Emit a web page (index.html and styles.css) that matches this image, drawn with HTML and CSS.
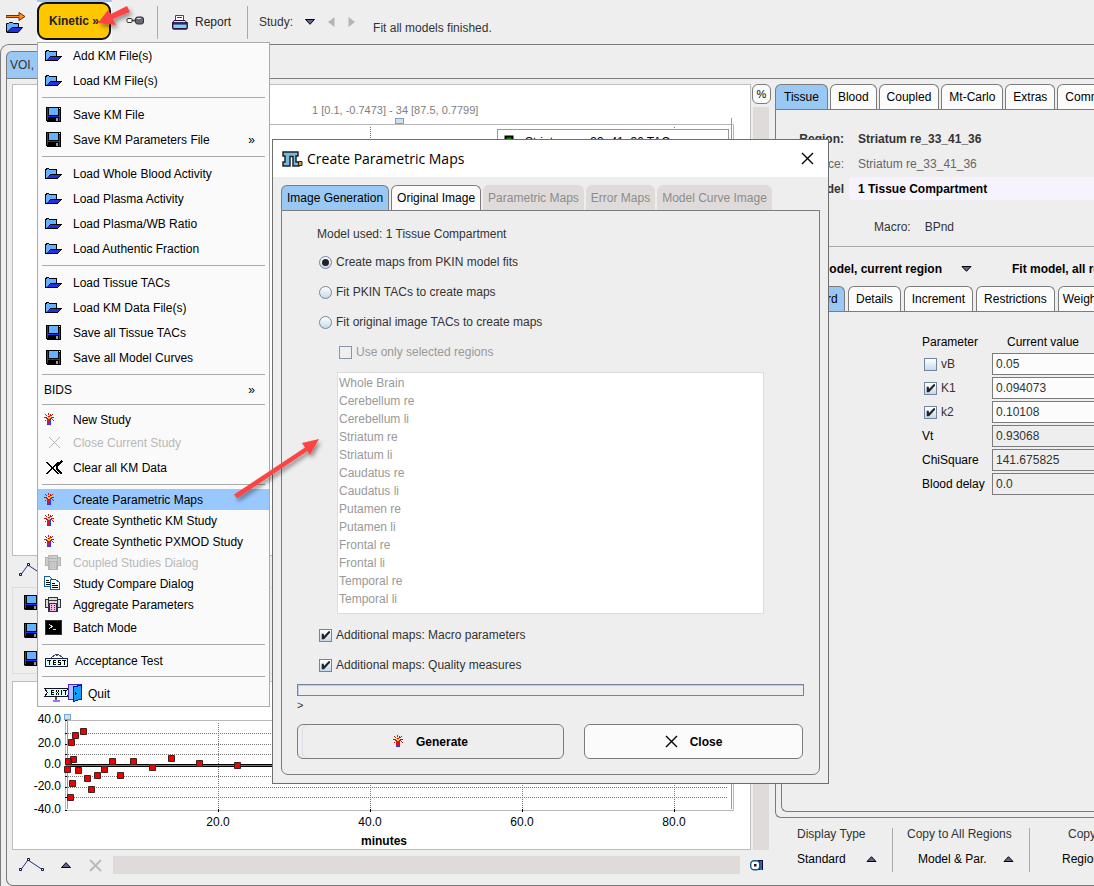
FILE: index.html
```html
<!DOCTYPE html>
<html lang="en">
<head>
<meta charset="utf-8">
<title>Kinetic modeling</title>
<link rel="stylesheet" href="styles.css">
</head>
<body>
<svg class="defs" aria-hidden="true">
  <symbol id="folder" viewBox="0 0 17 13"><path d="M0 2h1V1h3v1h8v5h5v1h-1v1h-1v1h-1v1h-1v1H0z" fill="#000"/><path d="M1 3h1V2h2v1h7v4H5L4 8 3 9 2 10 1 11z" fill="#62b3ff"/><path d="M5 8h10v1h-1v1h-1v1H2v-1h1V9h2z" fill="#2430e0"/></symbol>
  <symbol id="floppy" viewBox="0 0 15 15"><path d="M0 0h15v15H1l-1-1z" fill="#000"/><path d="M1 1h1v12H1zM13 3h1v11h-1zM2 9h11v1H2z" fill="#2430e0"/><path d="M3 1h9v7H3z" fill="#62b3ff"/><path d="M13 1h1v1h-1z" fill="#fff"/><path d="M10 11h2v3h-2z" fill="#999"/></symbol>
  <symbol id="wand" viewBox="0 0 11 13"><path d="M3 6h4v6H3z" fill="#2a35ff"/><path d="M3 6h3v5H3z" fill="#d81818"/><path d="M4 0h1v2H4zM6 1h1v2H6zM1 1h1v1H1zM2 2h1v1H2zM8 1h1v1H8zM7 2h1v1H7zM0 4h3v1H0zM7 4h3v1H7zM2 5h2v1H2zM6 5h2v1H6zM1 7h1v1H1zM8 6h1v1H8zM9 7h1v1H9z" fill="#c01818"/><path d="M3 3h1v1H3zM5 2h1v1H5zM6 3h1v1H6zM4 4h2v2H4z" fill="#ffc020"/><path d="M4 3h2v1H4z" fill="#c01818"/></symbol>
  <symbol id="cross" viewBox="0 0 13 13"><path d="M1 1l11 11M12 1L1 12" stroke="currentColor" stroke-width="1.400" fill="none"/></symbol>
  <symbol id="crosses" viewBox="0 0 17 15"><path d="M1 2l11 12M12 2L1 14M16 1l-5 5v3l5 5" stroke="#000" stroke-width="1.500" fill="none"/></symbol>
  <symbol id="multi" viewBox="0 0 18 17"><path d="M1 3h3V1h10v2h3v9h-3v4H4v-4H1z" fill="var(--s)"/><path d="M2 4h2v7H2zM14 4h2v7h-2zM5 2h8v2H5zM5 5h8v2H5z" fill="var(--f)"/><path d="M6 8h6v7H6z" fill="var(--p)"/><path d="M7 9h1v1H7zM10 9h1v1h-1zM7 11h1v1H7zM10 11h1v1h-1zM7 13h1v1H7zM10 13h1v1h-1z" fill="var(--s)"/></symbol>
  <symbol id="copy" viewBox="0 0 16 15"><path d="M.5.500h5l3 3v7h-8z" fill="#fff" stroke="#106090"/><path d="M2 4.500h3m-3 2h4m-4 2h4" stroke="#000"/><path d="M6.500 3.500h5l4 3v7h-9z" fill="#fff" stroke="#106090"/><path d="M8 7.500h3m-3 2h6m-6 2h6" stroke="#000"/></symbol>
  <symbol id="term" viewBox="0 0 17 15"><path d="M.5.500h16v14H.5z" fill="#000" stroke="#333"/><path d="M4 4l3 2.500L4 9M8 9.500h3" stroke="#ddd" fill="none"/></symbol>
  <symbol id="test" viewBox="0 0 24 15"><path d="M6 5l5-4h2l5 4M10 1.500l2 1 2-1" stroke="#447" fill="none"/><path d="M.5 5.500h22v8H.5z" fill="#e0fff8" stroke="#124"/><path d="M2 7.500h4M4.500 7.500V12M11 7.500H8.500v4H11M8 9.500h2.500M16 7.500h-2.500v2h2v2H13M17 7.500h4M19.500 7.500V12" stroke="#000" fill="none"/></symbol>
  <symbol id="exit" viewBox="0 0 38 19"><path d="M12 12v5" stroke="#187a30" stroke-width="2"/><path d="M9 17h7" stroke="#a070ff" stroke-width="2"/><path d="M.5 4.500h23l2 4-2 4H.5l3-4z" fill="#d8fff4" stroke="#112"/><path d="M10 6.500H7.500v4H10M7 8.500h3M12 6.500l3 4M15 6.500l-3 4M17.500 6v5M19 6.500h4M21.500 6.500V11" stroke="#000" fill="none"/><path d="M24.500.500h13v15h-13z" fill="#a8c8ff" stroke="#4a20d0"/><path d="M29.500 3l8-2v14l-8 2.500z" fill="#10a0ff" stroke="#1010a0"/><path d="M31 8l2 1.500-2 1.500z"/></symbol>
  <symbol id="line" viewBox="0 0 26 14"><path d="M2 11.500L9 2l15 10" stroke="#223088" fill="none"/><path d="M.5 10.500h2v2h-2zM8.500.500h2v2h-2zM22.500 10.500h2v2h-2z" fill="#fff" stroke="#114"/></symbol>
  <symbol id="up" viewBox="0 0 10 6"><path d="M.5 5.500h9L5 .7z" fill="#666290" stroke="#000"/></symbol>
  <symbol id="down" viewBox="0 0 10 6"><path d="M.5.500h9L5 5.300z" fill="#666290" stroke="#000"/></symbol>
</svg>

<header class="toolbar">
  <svg class="openicon" viewBox="0 0 20 21" width="20" height="21"><path d="M0 3.500h13V.500L19 4.500l-6 4V5.500H0z" fill="#ff8c1a" stroke="#6b3200"/><path d="M.5 20V11.500h2l1-1h3l1 1h5V18z" fill="#62b3ff" stroke="#000"/><path d="M1 20.500l5-5h10.500l-4.500 5z" fill="#2430e0" stroke="#000"/></svg>
  <div class="kwrap"><button class="kinetic">Kinetic »</button></div>
  <svg class="plug" viewBox="0 0 18 9" width="18" height="9"><path d="M5 4.500h5" stroke="#555" stroke-width="2"/><rect x="1" y="2.500" width="5" height="4" rx="1" fill="#fff" stroke="#333"/><rect x="9.500" y="1" width="8" height="7" rx="2" fill="#667" stroke="#333"/><path d="M11 2.500h4" stroke="#dde"/></svg>
  <span class="vsep"></span>
  <button class="plain report"><svg viewBox="0 0 16 16" width="16" height="16"><path d="M3.500 6V1.500h8V6" fill="#fff" stroke="#446"/><path d="M5 3.500h5" stroke="#446"/><path d="M2 6.500h11l2 2.500H.5z" fill="#e8e0f0" stroke="#2a1040"/><path d="M.7 9h14.500v5l-1 1H1.700l-1-1z" fill="#72d4ff" stroke="#2a1040" stroke-width="1.400"/><path d="M1 10h14M2 14.500h12" stroke="#2a1040"/></svg>Report</button>
  <span class="vsep"></span>
  <span class="study">Study:</span>
  <button class="plain drop" aria-label="Choose study"><svg width="10" height="6"><use href="#down"/></svg></button>
  <button class="plain nav" aria-label="Previous"><svg width="7" height="10"><path d="M6.500 0v10L0 5z" fill="#b5b5b5"/></svg></button>
  <button class="plain nav" aria-label="Next"><svg width="7" height="10"><path d="M.5 0v10L7 5z" fill="#b5b5b5"/></svg></button>
  <span class="status">Fit all models finished.</span>
</header>

<main class="frame">
  <div class="tabs"><button class="tab on voi">VOI, S</button></div>
  <div class="panel">
    <section class="left">
      <div class="plot">
        <svg class="fill" viewBox="13 85 737 470" preserveAspectRatio="xMinYMin slice">
          <text x="312" y="114" font-size="11" fill="#808080">1 [0.1, -0.7473] - 34 [87.5, 0.7799]</text>
          <path d="M66 124.500h667.500V540" stroke="#b8b8b8" fill="none"/>
          <path d="M731.500 118v430" stroke="#9a90cc"/>
          <path d="M370.500 127v410M674.500 127v410" stroke="#777" stroke-dasharray="1 1"/>
          <rect x="395.500" y="118.500" width="8" height="5" fill="#ddd" stroke="#7aa0dd"/>
          <rect x="497.500" y="129.500" width="231" height="60" fill="#fff" stroke="#999"/>
          <rect x="505.500" y="136.500" width="7" height="7" fill="#0a8a0a" stroke="#000" stroke-width="2"/>
          <text x="525" y="146" font-size="12">Striatum re_33_41_36 TAC</text>
        </svg>
      </div>
      <div class="side"><button class="pct">%</button><span class="bar"></span></div>
      <div class="tools"><svg width="26" height="14"><use href="#line"/></svg></div><i></i>
      <div class="saves">
        <svg width="15" height="15"><use href="#floppy"/></svg><svg width="15" height="15"><use href="#floppy"/></svg><svg width="15" height="15"><use href="#floppy"/></svg>
      </div><i></i>
      <div class="plot low">
        <svg class="fill" viewBox="13 682 737 167" preserveAspectRatio="xMinYMin slice">
          <g font-size="12" text-anchor="end"><text x="61" y="723">40.0</text><text x="61" y="747">20.0</text><text x="61" y="768">0.0</text><text x="61" y="790">-20.0</text><text x="61" y="813">-40.0</text></g>
          <g font-size="12" text-anchor="middle"><text x="218" y="826">20.0</text><text x="370" y="826">40.0</text><text x="522" y="826">60.0</text><text x="674" y="826">80.0</text><text x="384" y="845" font-weight="bold">minutes</text></g>
          <path d="M65.500 720.500h668v90h-668z" fill="none" stroke="#b8b8b8"/>
          <path d="M67.500 720v89M731.500 720v89" stroke="#9a90cc"/>
          <path d="M68 733.500h660M68 744.500h660M68 754.500h660M68 776.500h660M68 787.500h660M68 797.500h660M218.500 723v87M370.500 723v87M522.500 723v87M674.500 723v87" stroke="#777" stroke-dasharray="1 1"/>
          <path d="M65 720.500h2m-2 13h2m-2 11h2m-2 10h2m-2 22h2m-2 11h2m-2 10h2m-2 13h2M218.500 809v3M370.500 809v3M522.500 809v3M674.500 809v3" stroke="#000"/>
          <path d="M66 764.500h665M66 766.500h665" stroke="#000"/><path d="M66 765.500h665" stroke="#777"/>
          <rect x="64.500" y="714.500" width="6" height="5" fill="#ddd" stroke="#6fa8e8"/>
          <path fill="#f00000" stroke="#402020" d="M68.500 739.500h6v6h-6zM72.500 732.500h6v6h-6zM80.500 728.500h6v6h-6zM65.500 758.500h6v6h-6zM70.500 756.500h6v6h-6zM64.500 766.500h6v6h-6zM75.500 767.500h6v6h-6zM69.500 780.500h6v6h-6zM67.500 794.500h6v6h-6zM84.500 775.500h6v6h-6zM88.500 786.500h6v6h-6zM94.500 772.500h6v6h-6zM101.500 766.500h6v6h-6zM109.500 758.500h6v6h-6zM117.500 772.500h6v6h-6zM130.500 758.500h6v6h-6zM149.500 764.500h6v6h-6zM168.500 755.500h6v6h-6zM196.500 760.500h6v6h-6zM234.500 762.500h6v6h-6z"/>
        </svg>
      </div>
      <div class="side low"><span class="bar"></span></div>
      <div class="foot">
        <svg width="26" height="14"><use href="#line"/></svg>
        <svg width="10" height="6"><use href="#up"/></svg>
        <svg class="dim" width="13" height="13"><path d="M1 1l11 11M12 1L1 12" stroke="#bbb" stroke-width="2"/></svg>
        <span class="track"></span>
      </div>
      <div class="gear"><svg viewBox="0 0 14 12" width="14" height="12"><path d="M8 1h5v10H8z" fill="#1a0a3a"/><path d="M11 2v9" stroke="#2070a0" stroke-width="2"/><rect x=".7" y="1.700" width="9" height="9" rx="3.500" fill="#fff" stroke="#105a90" stroke-width="1.400"/><path d="M4 5h2.500v2.500H4z" fill="#200828"/></svg></div>
    </section>

    <section class="right">
      <div class="tabs"><button class="tab on tissue">Tissue</button><button class="tab">Blood</button><button class="tab">Coupled</button><button class="tab">Mt-Carlo</button><button class="tab">Extras</button><button class="tab">Comments</button></div>
      <div class="box outer">
        <div class="info">
          <b class="key">Region:</b><b>Striatum re_33_41_36</b>
          <span class="key soft">Source:</span><span class="soft">Striatum re_33_41_36</span>
          <b class="key">Model</b><button class="modelname">1 Tissue Compartment</button>
        </div>
        <div class="macro"><span>Macro:</span><span>BPnd</span></div>
        <div class="fit"><button class="plain fit1">Fit model, current region</button><svg width="11" height="6"><use href="#down"/></svg><button class="plain fit2">Fit model, all regions</button></div>
        <div class="tabs two"><button class="tab on std">Standard</button><button class="tab">Details</button><button class="tab">Increment</button><button class="tab">Restrictions</button><button class="tab weight">Weighting</button></div>
        <div class="box inner">
          <table class="params">
            <thead><tr><th>Parameter</th><th class="cv">Current value</th></tr></thead>
            <tbody>
              <tr><td><label class="ck"><input type="checkbox">vB</label></td><td><input class="val" value="0.05" aria-label="vB"></td></tr>
              <tr><td><label class="ck"><input type="checkbox" checked>K1</label></td><td><input class="val" value="0.094073" aria-label="K1"></td></tr>
              <tr><td><label class="ck"><input type="checkbox" checked>k2</label></td><td><input class="val" value="0.10108" aria-label="k2"></td></tr>
              <tr><td><label for="vt">Vt</label></td><td><input class="val ro" id="vt" value="0.93068" readonly></td></tr>
              <tr><td><label for="chi">ChiSquare</label></td><td><input class="val ro" id="chi" value="141.675825" readonly></td></tr>
              <tr><td><label for="bd">Blood delay</label></td><td><input class="val ro" id="bd" value="0.0" readonly></td></tr>
            </tbody>
          </table>
        </div>
      </div>
      <div class="actions">
        <div class="act"><span>Display Type</span><button class="plain">Standard<svg width="11" height="6"><use href="#up"/></svg></button></div>
        <span class="rule"></span>
        <div class="act mid"><span>Copy to All Regions</span><button class="plain">Model &amp; Par.<svg width="11" height="6"><use href="#up"/></svg></button></div>
        <span class="rule"></span>
        <div class="act last"><span>Copy to Region</span><button class="plain">Region</button></div>
      </div>
    </section>
  </div>
</main>

<nav class="menu">
  <button class="mi tall"><span class="ic"><svg width="17" height="13"><use href="#folder"/></svg></span>Add KM File(s)</button>
  <button class="mi tall"><span class="ic"><svg width="17" height="13"><use href="#folder"/></svg></span>Load KM File(s)</button>
  <hr>
  <button class="mi tall"><span class="ic f"><svg width="15" height="15"><use href="#floppy"/></svg></span>Save KM File</button>
  <button class="mi tall"><span class="ic f"><svg width="15" height="15"><use href="#floppy"/></svg></span>Save KM Parameters File<span class="more">»</span></button>
  <hr>
  <button class="mi tall"><span class="ic"><svg width="17" height="13"><use href="#folder"/></svg></span>Load Whole Blood Activity</button>
  <button class="mi tall"><span class="ic"><svg width="17" height="13"><use href="#folder"/></svg></span>Load Plasma Activity</button>
  <button class="mi tall"><span class="ic"><svg width="17" height="13"><use href="#folder"/></svg></span>Load Plasma/WB Ratio</button>
  <button class="mi tall"><span class="ic"><svg width="17" height="13"><use href="#folder"/></svg></span>Load Authentic Fraction</button>
  <hr>
  <button class="mi tall"><span class="ic"><svg width="17" height="13"><use href="#folder"/></svg></span>Load Tissue TACs</button>
  <button class="mi tall"><span class="ic"><svg width="17" height="13"><use href="#folder"/></svg></span>Load KM Data File(s)</button>
  <button class="mi tall"><span class="ic f"><svg width="15" height="15"><use href="#floppy"/></svg></span>Save all Tissue TACs</button>
  <button class="mi tall"><span class="ic f"><svg width="15" height="15"><use href="#floppy"/></svg></span>Save all Model Curves</button>
  <hr>
  <button class="mi">BIDS<span class="more">»</span></button>
  <hr>
  <button class="mi"><span class="ic w"><svg width="11" height="13"><use href="#wand"/></svg></span>New Study</button>
  <button class="mi tall" disabled><span class="ic x"><svg width="13" height="13"><use href="#cross"/></svg></span>Close Current Study</button>
  <button class="mi tall"><span class="ic f"><svg width="17" height="15"><use href="#crosses"/></svg></span>Clear all KM Data</button>
  <hr>
  <button class="mi sel"><span class="ic w"><svg width="11" height="13"><use href="#wand"/></svg></span>Create Parametric Maps</button>
  <button class="mi"><span class="ic w"><svg width="11" height="13"><use href="#wand"/></svg></span>Create Synthetic KM Study</button>
  <button class="mi"><span class="ic w"><svg width="11" height="13"><use href="#wand"/></svg></span>Create Synthetic PXMOD Study</button>
  <button class="mi" disabled><span class="ic w"><svg class="mg" width="18" height="17"><use href="#multi"/></svg></span>Coupled Studies Dialog</button>
  <button class="mi"><span class="ic w"><svg width="16" height="15"><use href="#copy"/></svg></span>Study Compare Dialog</button>
  <button class="mi"><span class="ic w"><svg class="mk" width="18" height="17"><use href="#multi"/></svg></span>Aggregate Parameters</button>
  <button class="mi tall"><span class="ic"><svg width="17" height="15"><use href="#term"/></svg></span>Batch Mode</button>
  <hr>
  <button class="mi accept"><span class="ic"><svg width="24" height="15"><use href="#test"/></svg></span>Acceptance Test</button>
  <hr>
  <button class="mi tall quit"><span class="ic w"><svg width="38" height="19"><use href="#exit"/></svg></span>Quit</button>
</nav>

<section class="dialog" role="dialog" aria-labelledby="dt">
  <div class="titlebar">
    <svg viewBox="0 0 21 16" width="21" height="16"><path d="M1 1h15v4h-2v6h3v4h-6V5.500H8V15H1v-4h2V5H1z" fill="#74b8e4" stroke="#222" stroke-width="1.500"/><path d="M16.500 10.500h3.500v4h-3.500z" fill="#f09020" stroke="#222"/></svg>
    <h1 id="dt">Create Parametric Maps</h1>
    <button class="plain shut" aria-label="Close window"><svg width="13" height="13"><use href="#cross"/></svg></button>
  </div>
  <div class="dbody">
    <div class="tabs"><button class="tab on">Image Generation</button><button class="tab">Original Image</button><button class="tab" disabled>Parametric Maps</button><button class="tab" disabled>Error Maps</button><button class="tab" disabled>Model Curve Image</button></div>
    <div class="box form">
      <div class="opts">
        <p>Model used: 1 Tissue Compartment</p>
        <label class="ck"><input type="radio" name="m" checked>Create maps from PKIN model fits</label>
        <label class="ck"><input type="radio" name="m">Fit PKIN TACs to create maps</label>
        <label class="ck"><input type="radio" name="m">Fit original image TACs to create maps</label>
        <label class="ck sub"><input type="checkbox" disabled>Use only selected regions</label>
        <ul class="list"><li>Whole Brain</li><li>Cerebellum re</li><li>Cerebellum li</li><li>Striatum re</li><li>Striatum li</li><li>Caudatus re</li><li>Caudatus li</li><li>Putamen re</li><li>Putamen li</li><li>Frontal re</li><li>Frontal li</li><li>Temporal re</li><li>Temporal li</li></ul>
        <label class="ck"><input type="checkbox" checked>Additional maps: Macro parameters</label>
        <label class="ck"><input type="checkbox" checked>Additional maps: Quality measures</label>
      </div>
      <div class="progress" role="progressbar" aria-label="Progress"></div>
      <div class="prompt">&gt;</div>
      <div class="btns">
        <button class="big gen"><svg width="11" height="13"><use href="#wand"/></svg>Generate</button>
        <button class="big"><svg width="13" height="13"><use href="#cross"/></svg>Close</button>
      </div>
    </div>
  </div>
</section>

<svg class="marks" viewBox="0 0 340 510" width="340" height="510" aria-hidden="true">
  <defs><filter id="sh" x="-20%" y="-20%" width="150%" height="150%"><feDropShadow dx="2" dy="3" stdDeviation="2" flood-color="#000" flood-opacity=".4"/></filter></defs>
  <g fill="#fb4545" filter="url(#sh)"><path d="M234 494.500L305 447.500 302 443 319 439 310 455 307.500 451 237 498.500z"/><path d="M98 23L108 10 111 14 127 6 130 12 113 19 116 25z"/></g>
</svg>
</body>
</html>
```
FILE: styles.css
```css
* { box-sizing: border-box; }
body {
  margin: 0;
  height: 100vh;
  position: relative;
  display: flex;
  flex-direction: column;
  overflow: hidden;
  background: #eee;
  color: #000;
  font: 12px/16px "Liberation Sans", Arial, sans-serif;
}
button, input { font: inherit; color: inherit; }
button { margin: 0; white-space: nowrap; }
svg { flex: none; display: block; }
.defs { position: absolute; width: 0; height: 0; }
.plain { border: 0; padding: 0; background: none; display: flex; align-items: center; }

/* toolbar */
.toolbar { height: 44px; flex: none; display: flex; align-items: center; padding-left: 6px; color: #333; }
.kwrap { align-self: stretch; margin-left: 11px; padding-right: 1px; border-top: 2px solid #a9c4e6; background: #fafafa; width: 75px; }
.kinetic { width: 100%; height: 38px; border: 2px solid #111; border-radius: 9px; background: #ffc700; font-weight: bold; padding: 0; color: #222; }
.plug { margin-left: 14px; margin-top: -3px; }
.vsep { width: 1px; height: 33px; background: #aaa; margin-left: 13px; }
.report { gap: 7px; margin-left: 14px; color: #222; }
.report + .vsep { margin-left: 16px; }
.study { margin-left: 11px; }
.drop { margin-left: 12px; }
.nav { margin-left: 13px; }
.status { margin-left: 18px; padding-top: 12px; }

/* tabs and frames */
.tabs { display: flex; gap: 2px; flex: none; }
.tab { flex: none; height: 25px; border: 1px solid #7c7c7c; border-bottom: 0; border-radius: 6px 6px 0 0; background: #fbfbfb; padding: 0 7px; }
.tab.on { background: #99c8f5; }
.tissue { padding: 0 8px; }
.tab:disabled { background: #dfdbda; border-color: #dfdbda; color: #8c8c8c; }
.frame { flex: 1; min-height: 0; display: flex; flex-direction: column; border: solid #7c7c7c; border-width: 1px 0 0 1px; border-radius: 9px 0 0 0; padding: 6px 0 0 5px; }
.voi { width: 90px; height: 27px; text-align: left; padding: 0 3px; color: #333; }
.panel { flex: 1; min-height: 0; display: flex; border: 1px solid #7c7c7c; border-right: 0; border-radius: 0 0 0 7px; padding: 5px 0 0 5px; }
.left { flex: 1; min-width: 0; display: grid; grid-template-columns: minmax(0, 1fr) 22px; column-gap: 2px; grid-template-rows: minmax(0, 1fr) 31px 87px 176px 35px; }
.plot { background: #fff; border: 1px solid #bdbdbd; }
.low { margin-top: 7px; }
.fill { width: 100%; height: 100%; }
.side { display: flex; flex-direction: column; gap: 3px; padding-right: 6px; }
.pct { width: 19px; height: 20px; margin-left: -1px; padding: 0; border: 1px solid #7c7c7c; border-radius: 6px; background: #fbfbfb; font-size: 11px; }
.bar { flex: 1; background: #dfdbda; }
.tools { padding: 7px 0 0 7px; }
.saves { border: 1px solid #ddd; display: flex; flex-direction: column; justify-content: center; gap: 13px; padding-left: 11px; }
.foot { display: flex; align-items: center; padding: 0 11px 5px 7px; }
.foot svg + svg { margin-left: 16px; }
.foot .dim { margin-left: 18px; }
.track { flex: 1; height: 18px; margin-left: 11px; background: #dfdbda; }
.gear { display: flex; align-items: center; padding-bottom: 5px; margin-left: -3px; }

/* right side */
.right { width: 319px; flex: none; display: flex; flex-direction: column; overflow: hidden; }
.box { border: 1px solid #7c7c7c; }
.outer { flex: 1; min-height: 0; border-right: 0; border-radius: 0 0 0 6px; display: flex; flex-direction: column; padding: 0 0 5px 5px; }
.info { display: grid; grid-template-columns: 63px 1fr; grid-auto-rows: 25px; align-items: center; column-gap: 14px; padding-top: 16px; color: #333; }
.key { text-align: right; }
.soft { color: #666; }
.modelname { height: 23px; margin-left: -9px; padding: 0 9px; border: 0; border-radius: 4px 0 0 4px; background: #f6f3fc; color: #000; font-weight: bold; text-align: left; }
.macro { display: flex; gap: 14px; padding: 18px 0 11px 98px; margin-left: -5px; color: #333; border-bottom: 1px solid #aaa; }
.fit { height: 39px; padding-top: 5px; display: flex; align-items: center; font-weight: bold; white-space: nowrap; }
.fit1 { flex: none; width: 161px; justify-content: flex-end; margin-right: 19px; }
.fit2 { flex: none; margin-left: 40px; }
.two { gap: 3px; }
.std { width: 64px; }
.weight { padding: 0 4px; }
.inner { flex: 1; border-right: 0; border-radius: 0 0 0 6px; padding: 20px 0 0 140px; }
.params { border-collapse: collapse; }
.params th { font-weight: normal; text-align: left; padding: 0; height: 20px; }
.params .cv { padding-left: 15px; }
.params td { padding: 0; height: 24px; min-width: 70px; white-space: nowrap; }
.params td .ck { padding-left: 2px; color: #333; }
.val { display: block; width: 116px; height: 22px; border: 1px solid #7c7c7c; background: #fcfcfc; padding: 0 3px; color: #333; }
.ro { background: #eee; }
.actions { height: 67px; flex: none; display: flex; align-items: flex-start; padding-top: 8px; white-space: nowrap; }
.act { flex: none; display: flex; flex-direction: column; gap: 9px; width: 117px; padding-left: 22px; color: #333; }
.act .plain { color: #000; gap: 20px; }
.rule { flex: none; width: 1px; height: 44px; margin-top: 2px; background: #aaa; }
.act.mid { width: 136px; padding-left: 14px; }
.mid .plain { padding-left: 11px; }
.act.mid .plain { gap: 16px; }
.act.last { padding-left: 32px; }
.last span { padding-left: 6px; }

/* controls */
.ck { display: flex; align-items: center; gap: 4px; white-space: nowrap; }
.ck input { appearance: none; flex: none; width: 13px; height: 13px; margin: 0; border: 1px solid #73859a; background: linear-gradient(#fff, #c5d9ec); }
.ck input[type=radio] { border-radius: 50%; }
.ck input:checked::after { content: ""; display: block; width: 7px; height: 7px; margin: 2px; background: #222; }
.ck input[type=radio]:checked::after { border-radius: 50%; }
.ck input[type=checkbox]:checked::after { width: 9px; height: 9px; margin: 1px; clip-path: polygon(8% 35%, 30% 35%, 34% 60%, 84% 8%, 100% 8%, 100% 26%, 34% 96%, 8% 96%); }
.ck input:disabled { background: none; border-color: #8796a8; }

/* drop-down menu */
.menu { position: absolute; left: 37px; top: 42px; width: 233px; border: 1px solid #aaa; background: #fafafa; display: flex; flex-direction: column; shape-rendering: crispEdges; }
.menu hr { width: 223px; height: 1px; margin: 4px; border: 0; background: #aaa; }
.mi { height: 21px; border: 0; background: none; padding: 0 14px 0 6px; display: flex; align-items: center; text-align: left; }
.mi.tall { height: 25px; }
.mi.accept { height: 23px; }
.mi:disabled { color: #b8b8b8; }
.mi.sel { background: #99c8ff; }
.ic { width: 29px; padding-left: 1px; flex: none; }
.ic.w { padding-left: 0; }
.ic.f { padding-left: 2px; }
.ic.x { padding-left: 4px; }
.accept .ic { width: 31px; }
.quit .ic { width: 44px; }
.more { margin-left: auto; }
.mg { --f: #ccc; --s: #b4b4b4; --p: #ccc; }
.mk { --f: #ddd; --s: #333; --p: #f5b8ee; }

/* dialog */
.dialog { position: absolute; left: 272px; top: 139px; width: 557px; border: 1px solid #6e6e6e; background: #eee; }
.titlebar { height: 37px; background: #fff; display: flex; align-items: center; padding: 0 14px 0 9px; }
.titlebar h1 { margin: 0 auto 0 4px; font: 14px/20px "Open Sans", "Noto Sans", sans-serif; }
.dbody { padding: 8px; }
.dbody .tab { padding: 0 5px; }
.dbody .tab:disabled { padding: 0 4px; }
.form { border-radius: 0 0 7px 7px; padding: 13px 15px 15px; color: #333; }
.opts { display: flex; flex-direction: column; gap: 14px; padding: 2px 0 0 22px; }
.opts p { margin: 0 0 -2px -2px; }
.sub { margin-left: 20px; color: #999; }
.list { list-style: none; margin: -2px 40px -1px 18px; padding: 1px; height: 242px; border: 1px solid #dcdcdc; background: #fff; color: #999; line-height: 18px; }
.progress { height: 12px; margin: 11px 0 0; border: 1px solid #73859a; box-shadow: inset 1px 1px #b8cfe5; }
.prompt { font-size: 11px; line-height: 18px; }
.btns { display: grid; grid-template-columns: 267fr 219fr; gap: 20px; padding: 10px 1px 0 0; }
.big { height: 35px; display: flex; align-items: center; justify-content: center; gap: 12px; border: 1px solid #7c7c7c; border-radius: 6px; background: #fbfbfb; color: #000; font-weight: bold; }
.gen { background: #eee; box-shadow: inset 4px 0 #eee, inset 5px 0 #dcdce8; }
.gen svg { shape-rendering: crispEdges; }
.marks { position: absolute; left: 0; top: 0; pointer-events: none; }
```
